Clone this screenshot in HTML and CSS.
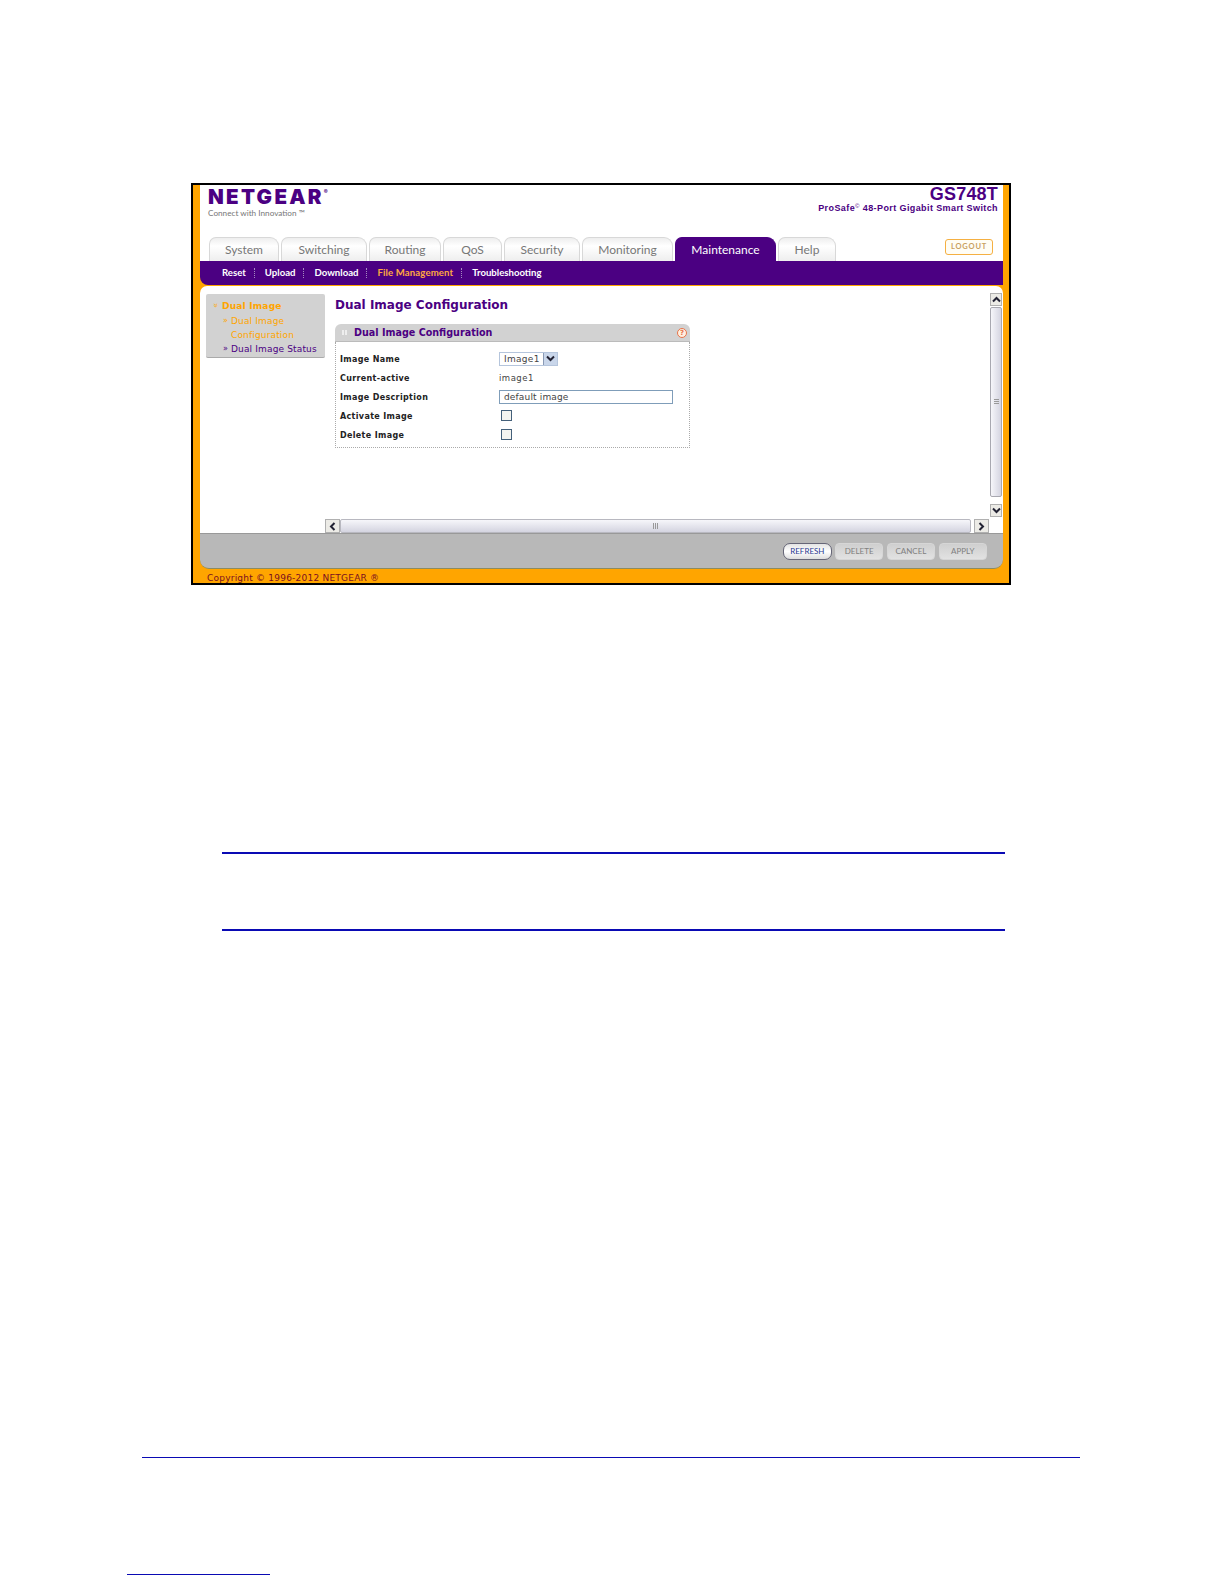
FILE: index.html
```html
<!DOCTYPE html>
<html lang="en">
<head>
<meta charset="utf-8">
<title>Dual Image Configuration</title>
<link rel="stylesheet" href="styles.css">
</head>
<body>
<div class="frame">
  <header class="head">
    <div class="brand-row">
      <div class="brand">
        <div class="logo">NETGEAR<sup>®</sup></div>
        <div class="tagline">Connect with Innovation ™</div>
      </div>
      <div class="model">
        <div class="model-name">GS748T</div>
        <div class="model-desc">ProSafe<sup>©</sup> 48-Port Gigabit Smart Switch</div>
      </div>
    </div>
    <div class="tabs-row">
      <nav class="tabs">
        <span class="tab t1">System</span>
        <span class="tab t2">Switching</span>
        <span class="tab t3">Routing</span>
        <span class="tab t4">QoS</span>
        <span class="tab t5">Security</span>
        <span class="tab t6">Monitoring</span>
        <span class="tab t7 on">Maintenance</span>
        <span class="tab t8">Help</span>
      </nav>
      <span class="logout">LOGOUT</span>
    </div>
  </header>
  <nav class="subnav">
    <span>Reset</span><i></i><span>Upload</span><i></i><span>Download</span><i></i><span class="cur">File Management</span><i></i><span>Troubleshooting</span>
  </nav>
  <div class="body">
    <div class="body-main">
      <aside class="side">
        <div class="side-title"><b class="arrow">»</b>Dual Image</div>
        <div class="side-item cur"><b class="arrow">»</b><span>Dual Image<br>Configuration</span></div>
        <div class="side-item"><b class="arrow">»</b><span>Dual Image Status</span></div>
      </aside>
      <main class="pane">
        <h1>Dual Image Configuration</h1>
        <section class="panel">
          <div class="panel-head">
            <span class="grip"></span>
            <span class="panel-title">Dual Image Configuration</span>
            <span class="help">?</span>
          </div>
          <div class="panel-body">
            <div class="row"><label>Image Name</label><span class="select"><span class="select-v">Image1</span><span class="select-b"><svg width="9" height="7" viewBox="0 0 9 7"><path d="M1 1.5 4.5 5 8 1.5" fill="none" stroke="#223" stroke-width="2"/></svg></span></span></div>
            <div class="row"><label>Current-active</label><span class="val">image1</span></div>
            <div class="row"><label>Image Description</label><span class="input">default image</span></div>
            <div class="row"><label>Activate Image</label><span class="check"></span></div>
            <div class="row"><label>Delete Image</label><span class="check"></span></div>
          </div>
        </section>
      </main>
      <div class="vscroll">
        <span class="sb-btn"><svg width="9" height="7" viewBox="0 0 9 7"><path d="M1 5.5 4.5 2 8 5.5" fill="none" stroke="#223" stroke-width="2"/></svg></span>
        <span class="v-thumb"><span class="v-grip"></span></span>
        <span class="sb-btn"><svg width="9" height="7" viewBox="0 0 9 7"><path d="M1 1.5 4.5 5 8 1.5" fill="none" stroke="#223" stroke-width="2"/></svg></span>
      </div>
    </div>
    <div class="hscroll">
      <span class="sb-btn h"><svg width="7" height="9" viewBox="0 0 7 9"><path d="M5.5 1 2 4.5 5.5 8" fill="none" stroke="#223" stroke-width="2"/></svg></span>
      <span class="h-thumb"><span class="h-grip"></span></span>
      <span class="sb-btn h end"><svg width="7" height="9" viewBox="0 0 7 9"><path d="M1.5 1 5 4.5 1.5 8" fill="none" stroke="#223" stroke-width="2"/></svg></span>
    </div>
  </div>
  <div class="actions">
    <span class="btn act">REFRESH</span>
    <span class="btn">DELETE</span>
    <span class="btn">CANCEL</span>
    <span class="btn">APPLY</span>
  </div>
  <footer class="copy">Copyright © 1996-2012 NETGEAR ®</footer>
</div>
<div class="rule note-top"></div>
<div class="rule note-bottom"></div>
<div class="rule foot-line"></div>
<div class="rule foot-short"></div>
</body>
</html>
```
FILE: styles.css
```css
* { box-sizing: border-box; }
html, body { margin: 0; padding: 0; }
body { width: 1224px; height: 1584px; background: #fff; overflow: hidden; font-family: "DejaVu Sans", sans-serif; }

.frame { width: 820px; height: 402px; margin: 183px 0 0 191px; border: 2px solid #000; background: #ffa500; padding: 0 6px 0 7px; display: flex; flex-direction: column; }
.head { height: 76px; background: #fff; display: flex; flex-direction: column; }
.brand-row { height: 52px; display: flex; justify-content: space-between; padding: 0 5px 0 8px; }
.brand { padding-top: 2px; }
.logo { font: 900 20.5px/20px Inter, Lato, sans-serif; letter-spacing: 2.3px; color: #4b0082; height: 20px; }
.logo sup { font-size: 6px; letter-spacing: 0; vertical-align: 10px; line-height: 0; }
.tagline { font: 8.2px/12px Lato, sans-serif; color: #777; }
.model { text-align: right; padding-top: 1px; }
.model-name { font: bold 18px/16px "Liberation Sans", sans-serif; color: #4b0082; letter-spacing: .2px; }
.model-desc { font: bold 9px/11px "Liberation Sans", sans-serif; color: #4b0082; letter-spacing: .4px; margin-top: 1px; }
.model-desc sup { font-size: 6px; line-height: 0; vertical-align: 3px; font-weight: normal; }

.tabs-row { height: 24px; display: flex; justify-content: space-between; padding: 0 10px 0 9px; }
.tabs { display: flex; gap: 2px; }
.tab { height: 24px; border: 1px solid #d8d8d8; border-bottom: 0; border-radius: 7px 9px 0 0; background: linear-gradient(#eee, #fff 35%, #eee); font: 12px/23px Lato, sans-serif; color: #777; text-align: center; }
.t1 { width: 70px; } .t2 { width: 86px; } .t3 { width: 72px; } .t4 { width: 59px; } .t5 { width: 76px; } .t6 { width: 91px; } .t7 { width: 101px; } .t8 { width: 58px; }
.tab.on { background: #4b0082; border-color: #4b0082; color: #fff; }
.logout { width: 48px; height: 16px; margin-top: 2px; border: 1px solid #f5b042; border-radius: 3px; background: #fffdf5; font: bold 7.5px/14px Lato, sans-serif; letter-spacing: .8px; color: #c8a060; text-align: center; }

.subnav { height: 24px; background: #4b0082; border-radius: 0 0 0 8px; display: flex; align-items: center; padding: 0 0 1px 22px; font: bold 9.6px/14px Lato, sans-serif; color: #fff; }
.subnav .cur { color: #ffa940; letter-spacing: .12px; }
.subnav i { width: 0; height: 10px; border-left: 1px dotted #a58cc0; margin: 0 10px 0 8px; }

.body { height: 247px; margin-top: 1px; background: #fff; border-radius: 7px 7px 0 0; display: flex; flex-direction: column; }
.body-main { height: 233px; display: flex; }
.side { width: 119px; height: 64px; margin: 8px 0 0 6px; background: #d2d2d2; border-bottom: 1px solid #aaa; border-radius: 2px; padding: 5px 0 0 5px; font: 9px/14px "DejaVu Sans", sans-serif; color: #4b0082; letter-spacing: .15px; }
.side-title { color: #ffa500; font-weight: bold; font-size: 9.1px; }
.arrow { display: inline-block; font-weight: normal; font-size: 8px; }
.side-title .arrow { width: 8px; margin-right: 3px; transform: rotate(90deg); }
.side-item { display: flex; padding-left: 12px; }
.side-item .arrow { width: 8px; flex: none; }
.side-item.cur { color: #ffa500; }
.pane { flex: 1; padding: 10px 0 0 10px; }
h1 { margin: 0; font: bold 12px/18px "DejaVu Sans", sans-serif; color: #4b0082; }
.panel { width: 355px; margin-top: 10px; }
.panel-head { height: 18px; background: #d2d2d2; border-bottom: 1px solid #bbb; border-radius: 6px 6px 0 0; display: flex; align-items: center; padding: 0 3px 0 7px; }
.grip { width: 5px; height: 5px; margin-right: 7px; background: repeating-linear-gradient(90deg, #eee 0 2px, transparent 2px 3px); }
.panel-title { flex: 1; font: bold 9.6px/14px "DejaVu Sans", sans-serif; color: #4b0082; }
.help { width: 10px; height: 10px; border: 1px solid #e8734a; border-radius: 50%; background: #fff0e0; font: bold 7px/8px "DejaVu Sans", sans-serif; color: #e8734a; text-align: center; }
.panel-body { height: 106px; border: 1px dotted #aaa; border-top: 0; padding: 7px 0 0 4px; }
.row { height: 19px; display: flex; align-items: center; }
.row label { width: 159px; padding-top: 2px; font: bold 8px/12px "DejaVu Sans", sans-serif; color: #222; letter-spacing: .34px; }
.val { font: 8.5px/12px "DejaVu Sans", sans-serif; color: #444; letter-spacing: .5px; }
.select { width: 59px; height: 14px; display: flex; border: 1px solid #b5c5dc; background: #fff; }
.select-v { flex: 1; padding-left: 4px; font: 9px/13px "DejaVu Sans", sans-serif; color: #444; letter-spacing: .3px; }
.select-b { width: 14px; background: #c9d6ea; border-left: 1px solid #8a9ab5; display: flex; align-items: center; justify-content: center; }
.input { width: 174px; height: 14px; border: 1px solid #7f9db9; padding-left: 4px; font: 9px/13px "DejaVu Sans", sans-serif; color: #444; letter-spacing: .15px; }
.check { width: 11px; height: 11px; margin-left: 2px; border: 1px solid #44607a; background: #f4f4f0; }

.vscroll { width: 12px; height: 224px; margin: 7px 1px 0 0; display: flex; flex-direction: column; gap: 1px; }
.sb-btn { flex: none; width: 12px; height: 13px; background: #ecebe6; border: 1px solid #b0b0b0; display: flex; align-items: center; justify-content: center; }
.sb-btn.h { width: 15px; height: 14px; }
.sb-btn.end { margin-left: 2px; }
.v-thumb { flex: 1; margin-bottom: 6px; background: linear-gradient(90deg, #f6f6fa, #d4d4e0); border: 1px solid #a8a8b0; border-radius: 2px; display: flex; align-items: center; justify-content: center; }
.v-grip { width: 5px; height: 6px; background: repeating-linear-gradient(#999 0 1px, transparent 1px 2px); }
.hscroll { height: 14px; margin-left: 125px; width: 664px; display: flex; }
.h-thumb { flex: 1; margin-right: 1px; background: linear-gradient(#f6f6fa, #d4d4e0); border: 1px solid #b8b8c0; border-radius: 2px; display: flex; align-items: center; justify-content: center; }
.h-grip { width: 6px; height: 6px; background: repeating-linear-gradient(90deg, #999 0 1px, transparent 1px 2px); }

.actions { height: 36px; background: #b8b8b8; border-top: 1px solid #999; border-bottom: 1px solid #8c8c60; border-radius: 0 0 9px 9px; display: flex; justify-content: flex-end; align-items: center; gap: 3.3px; padding: 0 16px 0 0; }
.btn { width: 48.5px; height: 17px; border: 1px solid #d6d6d6; border-radius: 4px; background: linear-gradient(#cfcfcf, #e2e2e2); font: 8px/15px Lato, sans-serif; color: #808080; text-align: center; }
.btn.act { border-color: #667; border-radius: 7px; background: linear-gradient(#e4e4e4, #fff 50%, #ddd); color: #2a3a90; }
.copy { height: 14px; padding-left: 7px; font: 9px/19px "DejaVu Sans", sans-serif; color: #7a1020; letter-spacing: .22px; }

.rule { background: #0a0ab4; }
.note-top { width: 783px; height: 2px; margin: 267px 0 0 222px; }
.note-bottom { width: 783px; height: 2px; margin: 75px 0 0 222px; }
.foot-line { width: 938px; height: 1px; margin: 526px 0 0 142px; }
.foot-short { width: 143px; height: 1px; margin: 116px 0 0 127px; }
```
